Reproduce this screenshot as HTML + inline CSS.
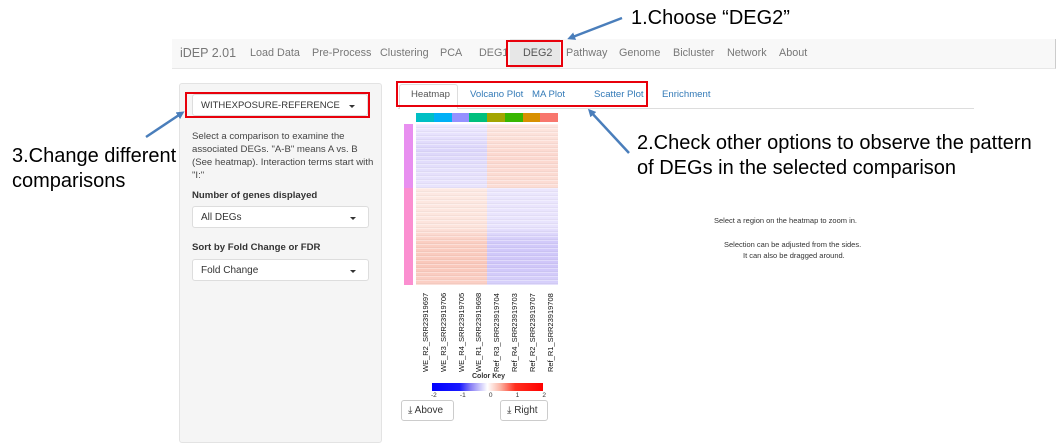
<!DOCTYPE html>
<html><head><meta charset="utf-8"><style>
*{box-sizing:border-box;margin:0;padding:0}
body{width:1058px;height:437px;background:#fff;position:relative;overflow:hidden;font-family:"Liberation Sans",sans-serif;color:#333}
.abs{position:absolute}
.nav{left:172px;top:39px;width:884px;height:30px;background:#f8f8f8;border-bottom:1px solid #e7e7e7;border-right:1px solid #ccc}
.nav span{position:absolute;top:8px;font-size:10.8px;color:#777}
.side{left:179px;top:83px;width:203px;height:360px;background:#f5f5f5;border:1px solid #e3e3e3;border-radius:3px}
.sel{background:#fff;border:1px solid #ddd;border-radius:3px;height:22px;font-size:10px;padding:5px 8px;color:#333}
.sel:after{content:"";position:absolute;right:12px;top:10px;border:3px solid transparent;border-top:3px solid #333}
.red{border:2px solid #e8000b}
.tab{font-size:9.6px;color:#337ab7;top:89px}
.ann{font-size:20px;color:#000;white-space:nowrap}
.lab{font-size:7.5px;color:#111;transform:rotate(-90deg);transform-origin:left top;white-space:nowrap}
.btn{background:#fff;border:1px solid #ccc;border-radius:3px;font-size:10px;height:21px;padding:4px 6px;color:#333}
</style></head><body>
<div class="abs nav">
<span style="left:8px;top:7px;font-size:12.5px">iDEP 2.01</span>
<span style="left:78px">Load Data</span>
<span style="left:140px">Pre-Process</span>
<span style="left:208px">Clustering</span>
<span style="left:268px">PCA</span>
<span style="left:307px">DEG1</span>
<div class="abs" style="left:338px;top:0;width:50px;height:30px;background:#e7e7e7"></div>
<span style="left:351px;color:#555">DEG2</span>
<span style="left:394px">Pathway</span>
<span style="left:447px">Genome</span>
<span style="left:501px">Bicluster</span>
<span style="left:555px">Network</span>
<span style="left:607px">About</span>
</div>
<div class="abs red" style="left:506px;top:40px;width:57px;height:27px"></div>

<div class="abs side"></div>
<div class="abs sel" style="left:192px;top:94px;width:176px;font-size:9.5px">WITHEXPOSURE-REFERENCE</div>
<div class="abs red" style="left:185px;top:92px;width:185px;height:26px"></div>
<div class="abs" style="left:192px;top:130px;width:182px;font-size:9.6px;line-height:13px;color:#444">Select a comparison to examine the associated DEGs. "A-B" means A vs. B (See heatmap). Interaction terms start with "I:"</div>
<div class="abs" style="left:192px;top:190px;font-size:9.6px;font-weight:bold">Number of genes displayed</div>
<div class="abs sel" style="left:192px;top:206px;width:177px">All DEGs</div>
<div class="abs" style="left:192px;top:242px;font-size:9.6px;font-weight:bold">Sort by Fold Change or FDR</div>
<div class="abs sel" style="left:192px;top:259px;width:177px">Fold Change</div>

<div class="abs" style="left:398px;top:108px;width:576px;border-top:1px solid #ddd"></div>
<div class="abs" style="left:399px;top:84px;width:59px;height:25px;background:#fff;border:1px solid #ddd;border-bottom:none;border-radius:3px 3px 0 0"></div>
<div class="abs tab" style="left:411px;color:#555">Heatmap</div>
<div class="abs tab" style="left:470px">Volcano Plot</div>
<div class="abs tab" style="left:532px">MA Plot</div>
<div class="abs tab" style="left:594px">Scatter Plot</div>
<div class="abs tab" style="left:662px">Enrichment</div>
<div class="abs red" style="left:396px;top:81px;width:252px;height:26px"></div>

<div class="abs" style="left:416px;top:113px;width:142px;height:9px;display:flex">
<div style="flex:1;background:#00bfc4"></div><div style="flex:1;background:#00b0f6"></div><div style="flex:1;background:#9590ff"></div><div style="flex:1;background:#00bf7d"></div><div style="flex:1;background:#a3a500"></div><div style="flex:1;background:#39b600"></div><div style="flex:1;background:#d89000"></div><div style="flex:1;background:#f8766d"></div>
</div>
<div class="abs" style="left:404px;top:124px;width:9px;height:64px;background:#e88ff0"></div>
<div class="abs" style="left:404px;top:188px;width:9px;height:97px;background:#fb8fd0"></div>
<div class="abs" style="left:416px;top:124px;width:71px;height:64px;background:linear-gradient(#efeaff,#dcd6fb 40%,#e4dffc 70%,#e9e4fd)"></div>
<div class="abs" style="left:487px;top:124px;width:71px;height:64px;background:linear-gradient(#fde6e0,#fcd8cf 50%,#fcddd5)"></div>
<div class="abs" style="left:416px;top:188px;width:71px;height:97px;background:linear-gradient(#fde9e3,#fde4dc 40%,#fbcfc3 55%,#fac8bb 80%,#fbd0c6)"></div>
<div class="abs" style="left:487px;top:188px;width:71px;height:97px;background:linear-gradient(#ebe6fd,#e8e3fd 40%,#d2cafa 55%,#cfc6f9 80%,#d8d1fb)"></div>
<div class="abs" style="left:416px;top:124px;width:142px;height:161px;background:repeating-linear-gradient(rgba(255,255,255,.35) 0 1px,transparent 1px 3px,rgba(0,0,0,.03) 3px 4px)"></div>

<div class="abs lab" style="left:421px;top:372px">WE_R2_SRR23919697</div>
<div class="abs lab" style="left:439px;top:372px">WE_R3_SRR23919706</div>
<div class="abs lab" style="left:457px;top:372px">WE_R4_SRR23919705</div>
<div class="abs lab" style="left:474px;top:372px">WE_R1_SRR23919698</div>
<div class="abs lab" style="left:492px;top:372px">Ref_R3_SRR23919704</div>
<div class="abs lab" style="left:510px;top:372px">Ref_R4_SRR23919703</div>
<div class="abs lab" style="left:528px;top:372px">Ref_R2_SRR23919707</div>
<div class="abs lab" style="left:546px;top:372px">Ref_R1_SRR23919708</div>
<div class="abs" style="left:472px;top:373px;font-size:7px;font-weight:bold">Color Key</div>
<div class="abs" style="left:432px;top:383px;width:111px;height:8px;background:linear-gradient(90deg,#0000ff,#1a1aff 25%,#8a80f5 35%,#fff 50%,#fbb0a0 62%,#ff3020 75%,#ff0000)"></div>
<div class="abs" style="left:431px;top:392px;width:115px;font-size:6.5px;display:flex;justify-content:space-between"><span>-2</span><span>-1</span><span>0</span><span>1</span><span>2</span></div>
<div class="abs btn" style="left:401px;top:400px;width:53px">&#x2913; Above</div>
<div class="abs btn" style="left:500px;top:400px;width:48px">&#x2913; Right</div>

<div class="abs" style="left:714px;top:216px;font-size:7.5px">Select a region on the heatmap to zoom in.</div>
<div class="abs" style="left:724px;top:240px;font-size:7.5px">Selection can be adjusted from the sides.</div>
<div class="abs" style="left:743px;top:251px;font-size:7.5px">It can also be dragged around.</div>

<div class="abs ann" style="left:631px;top:7px">1.Choose “DEG2”</div>
<div class="abs ann" style="left:637px;top:131px;line-height:25px">2.Check other options to observe the pattern<br>of DEGs in the selected comparison</div>
<div class="abs ann" style="left:12px;top:144px;line-height:25px">3.Change different<br>comparisons</div>

<svg class="abs" style="left:0;top:0" width="1058" height="437">
<defs><marker id="a" markerWidth="8" markerHeight="8" refX="5" refY="4" orient="auto" markerUnits="userSpaceOnUse"><path d="M0,0 L8,4 L0,8 z" fill="#4a7ebb"/></marker></defs>
<g stroke="#4a7ebb" stroke-width="2.5" fill="none">
<line x1="622" y1="18" x2="570" y2="38" marker-end="url(#a)"/>
<line x1="629" y1="153" x2="590" y2="111" marker-end="url(#a)"/>
<line x1="146" y1="137" x2="182" y2="113" marker-end="url(#a)"/>
</g></svg>
</body></html>
